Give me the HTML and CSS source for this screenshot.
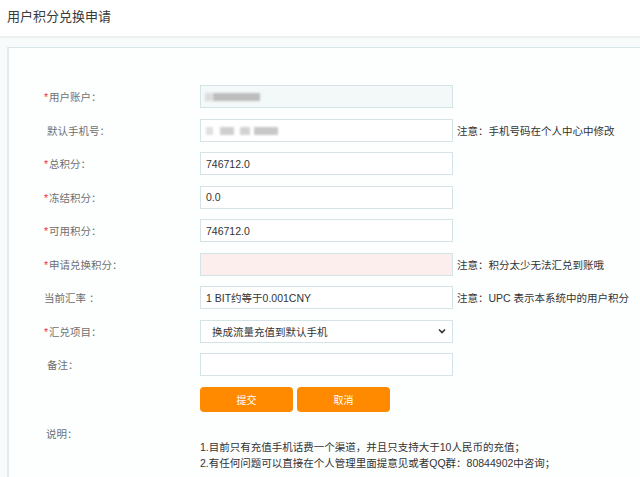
FILE: index.html
```html
<!DOCTYPE html>
<html lang="zh-CN">
<head>
<meta charset="utf-8">
<title>用户积分兑换申请</title>
<link rel="stylesheet" href="styles.css">
</head>
<body>
<div class="header"><h1 class="title">用户积分兑换申请</h1></div>
<div class="wrap">
  <div class="panel">
    <form class="form">
      <div class="row">
        <label class="label"><span class="req">*</span>用户账户：</label>
        <div class="field ro">
          <span class="blur b1"></span><span class="blur b2"></span>
        </div>
      </div>
      <div class="row">
        <label class="label pad">默认手机号：</label>
        <div class="field plain">
          <span class="blur b3"></span><span class="blur b4"></span><span class="blur b5"></span><span class="blur b6"></span>
        </div>
        <span class="note">注意：手机号码在个人中心中修改</span>
      </div>
      <div class="row">
        <label class="label"><span class="req">*</span>总积分：</label>
        <input class="field" type="text" value="746712.0">
      </div>
      <div class="row">
        <label class="label"><span class="req">*</span>冻结积分：</label>
        <input class="field" type="text" value="0.0">
      </div>
      <div class="row">
        <label class="label"><span class="req">*</span>可用积分：</label>
        <input class="field" type="text" value="746712.0">
      </div>
      <div class="row">
        <label class="label"><span class="req">*</span>申请兑换积分：</label>
        <input class="field err" type="text" value="">
        <span class="note">注意：积分太少无法汇兑到账哦</span>
      </div>
      <div class="row">
        <label class="label">当前汇率 ：</label>
        <input class="field" type="text" value="1 BIT约等于0.001CNY">
        <span class="note">注意：UPC 表示本系统中的用户积分</span>
      </div>
      <div class="row">
        <label class="label"><span class="req">*</span>汇兑项目：</label>
        <div class="field select">
          <span>换成流量充值到默认手机</span>
          <svg class="chev" width="8" height="6" viewBox="0 0 8 6"><path d="M1 1.5 L4 4.5 L7 1.5" fill="none" stroke="#333" stroke-width="1.6"/></svg>
        </div>
      </div>
      <div class="row">
        <label class="label pad">备注：</label>
        <input class="field" type="text" value="">
      </div>
      <div class="btns">
        <button type="button" class="btn">提交</button>
        <button type="button" class="btn">取消</button>
      </div>
      <div class="desc">
        <div class="label">说明：</div>
        <div class="desc-body">
          <p>1.目前只有充值手机话费一个渠道，并且只支持大于10人民币的充值；</p>
          <p>2.有任何问题可以直接在个人管理里面提意见或者QQ群：80844902中咨询；</p>
        </div>
      </div>
    </form>
  </div>
</div>
</body>
</html>
```
FILE: styles.css
```css
html, body {
  margin: 0;
  padding: 0;
  background: #ffffff;
  font-family: "Liberation Sans", "Noto Sans CJK SC", sans-serif;
  font-size: 10.5px;
  color: #333;
  overflow: hidden;
}
.header {
  height: 36px;
  border-bottom: 2px solid #efefef;
  padding-left: 7px;
  display: flex;
  align-items: center;
}
.title {
  margin: 0;
  font-size: 13px;
  font-weight: normal;
  color: #3a3a3a;
  line-height: 36px;
  margin-top: -2px;
}
.wrap {
  background: #f8fbfc;
  padding: 9px 0 0 7px;
  height: 440px;
}
.panel {
  background: #fdfefe;
  border-top: 1px solid #d7e4e8;
  border-left: 2px solid #e2ecef;
  height: 100%;
}
.form {
  padding: 37px 0 0 35px;
}
.row {
  display: flex;
  align-items: center;
  height: 23px;
  margin-bottom: 10.5px;
}
.label {
  width: 156px;
  flex: none;
  color: #707070;
  font-size: 10.5px;
}
.label.pad {
  padding-left: 3px;
  width: 153px;
}
.req {
  color: #e33;
  margin-right: 1px;
}
.field {
  box-sizing: border-box;
  width: 253px;
  height: 23px;
  border: 1px solid #d3e3e6;
  background: #fff;
  padding: 0 5px;
  font-family: inherit;
  font-size: 10.5px;
  color: #333;
  margin: 0;
  outline: none;
  flex: none;
}
.field.ro {
  background: #f3f8f9;
  position: relative;
}
.field.plain {
  position: relative;
}
.field.err {
  background: #fdeeee;
}
.blur {
  position: absolute;
  top: 7px;
  height: 8px;
  background: #b5b5b5;
  filter: blur(1px);
}
.b1 { left: 4px; width: 8px; background: #dcdcdc; }
.b2 { left: 12px; width: 47px; background: #bdbdbd; }
.b3 { left: 5px; width: 7px; background: #e0e0e0; }
.b4 { left: 19px; width: 14px; background: #cfcfcf; }
.b5 { left: 39px; width: 10px; background: #d3d3d3; }
.b6 { left: 53px; width: 24px; background: #c8c8c8; }
.field.select {
  display: flex;
  align-items: center;
  justify-content: space-between;
  padding: 0 6px 0 11px;
}
.chev {
  display: block;
}
.note {
  margin-left: 4px;
  color: #333;
  white-space: nowrap;
}
.btns {
  display: flex;
  gap: 4px;
  margin-left: 156px;
  margin-top: 1.5px;
}
.btn {
  width: 93px;
  height: 25px;
  border: none;
  border-radius: 4px;
  background: #ff8a00;
  color: #fff;
  font-family: inherit;
  font-size: 10px;
  padding: 0;
}
.desc {
  display: flex;
  margin-top: 14px;
  line-height: 16px;
}
.desc .label {
  padding-left: 2px;
  width: 154px;
}
.desc-body {
  padding-top: 13px;
}
.desc-body p {
  margin: 0;
  line-height: 16px;
  color: #333;
}
```
